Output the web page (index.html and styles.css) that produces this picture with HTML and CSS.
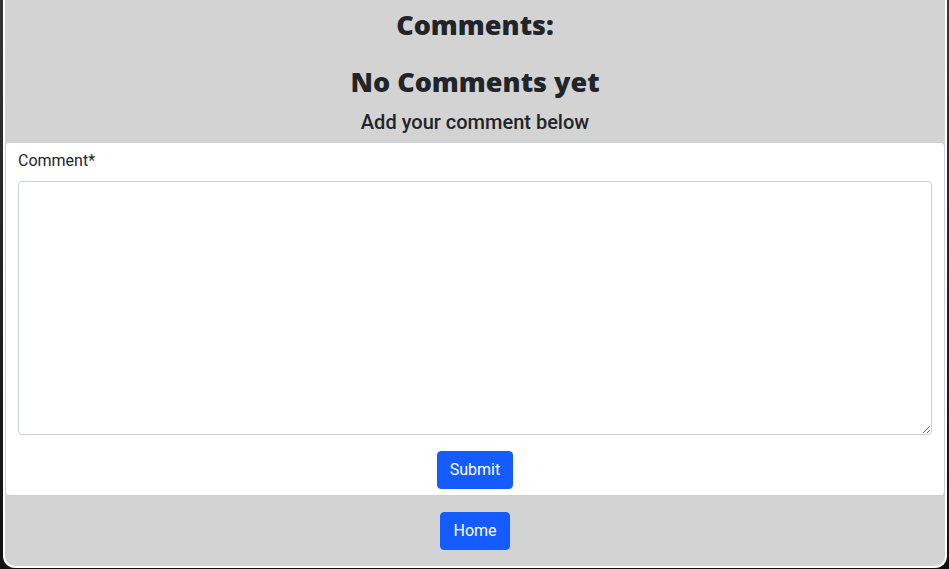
FILE: index.html
```html
<!DOCTYPE html>
<html lang="en">
<head>
<meta charset="utf-8">
<meta name="viewport" content="width=device-width, initial-scale=1">
<title>Comments</title>
<link rel="stylesheet" href="styles.css">
</head>
<body>
<main class="panel">
  <header class="intro">
    <h2 class="title">Comments:</h2>
    <h2 class="title">No Comments yet</h2>
    <p class="lead">Add your comment below</p>
  </header>
  <form class="comment-form">
    <label class="label" for="comment">Comment*</label>
    <textarea class="field" id="comment" name="comment" rows="10" required></textarea>
    <button class="button" type="submit">Submit</button>
  </form>
  <footer class="actions">
    <a class="button" href="#">Home</a>
  </footer>
</main>
</body>
</html>
```
FILE: styles.css
```css
* {
  box-sizing: border-box;
}

body {
  margin: 0;
  padding: 0 2px 1px 3px;
  background: linear-gradient(#353535, #111);
  color: #212529;
  font-family: Roboto, "Liberation Sans", sans-serif;
  font-size: 16px;
  line-height: 24px;
}

.panel {
  border: 2px solid #fff;
  border-top: 0;
  border-radius: 0 0 12px 12px;
  background: #d3d3d3;
}

.intro {
  padding: 6px 16px 8px;
  text-align: center;
}

.title {
  margin: 0 0 8px;
  font-family: "Open Sans", sans-serif;
  font-size: 27px;
  font-weight: 800;
  line-height: 38px;
}

.title + .title {
  margin: 19px 0 9px;
}

.lead {
  margin: 0;
  font-size: 20px;
  font-weight: 500;
  line-height: 24px;
}

.comment-form {
  display: flex;
  flex-direction: column;
  align-items: center;
  padding: 6px 12px;
  border: 1px solid #c9d0dc;
  border-radius: 4px;
  background: #fff;
}

.label {
  align-self: flex-start;
  margin-bottom: 8px;
}

.field {
  display: block;
  width: 100%;
  margin-bottom: 16px;
  padding: 6px 12px;
  border: 1px solid #c9d0dc;
  border-radius: 4px;
  background: #fff;
  color: inherit;
  font: inherit;
  resize: vertical;
}

.button {
  display: inline-block;
  padding: 6px 12px;
  border: 1px solid #145cff;
  border-radius: 4px;
  background: #145cff;
  color: #fff;
  font: inherit;
  text-decoration: none;
}

.actions {
  display: flex;
  justify-content: center;
  padding: 16px;
}
```
